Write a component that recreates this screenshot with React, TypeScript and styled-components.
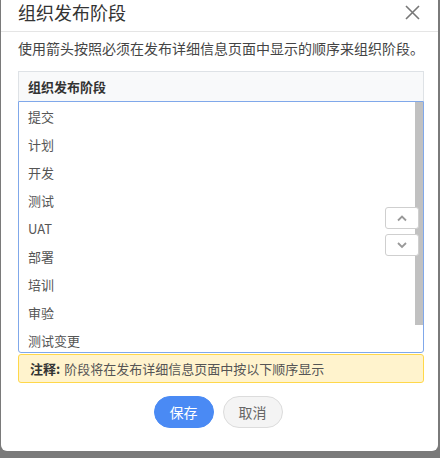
import styled, { createGlobalStyle } from 'styled-components'

const GlobalStyle = createGlobalStyle`
  html, body {
    margin: 0;
    padding: 0;
    background: #7a7a7a;
    font-family: "Noto Sans CJK SC", "Noto Sans", sans-serif;
  }
`

const Dialog = styled.div`
  margin-left: 1px;
  width: 437px;
  height: 451px;
  background: #fff;
  border-radius: 0 0 6px 6px;
  box-sizing: border-box;
`

const Header = styled.div`
  height: 25px;
  padding: 0 18px 6px 17px;
  display: flex;
  align-items: center;
  justify-content: space-between;
  border-bottom: 1px solid #e5e5e5;
`

const Title = styled.div`
  font-size: 18px;
  line-height: 25px;
  color: #333;
`

const CloseButton = styled.button`
  border: none;
  background: none;
  padding: 0;
  width: 16px;
  height: 16px;
  display: flex;
  align-items: center;
  justify-content: center;
  cursor: pointer;
`

const Body = styled.div`
  padding: 0 14px 0 17px;
`

const Description = styled.p`
  margin: 6px 0 13px;
  font-size: 14px;
  line-height: 20px;
  color: #444;
  white-space: nowrap;
`

const TableHeader = styled.div`
  height: 29px;
  padding-left: 9px;
  display: flex;
  align-items: center;
  background: #f8f9fa;
  border: 1px solid #dee2e6;
  border-bottom: none;
  font-size: 13px;
  font-weight: 700;
  color: #333;
`

const ListWrap = styled.div`
  position: relative;
`

const StageList = styled.ul`
  margin: 0;
  padding: 0 0 28px;
  list-style: none;
  box-sizing: border-box;
  height: 252px;
  border: 1px solid #80a8ea;
  border-radius: 0 0 3px 3px;
  overflow-y: auto;
  scrollbar-width: none;

  &::-webkit-scrollbar {
    display: none;
  }
`

// drawn scrollbar thumb, sits over the list's right edge
const ScrollThumb = styled.div`
  position: absolute;
  top: 1px;
  right: 1px;
  width: 8px;
  height: 223px;
  background: #c1c1c1;
`

const StageItem = styled.li`
  height: 28px;
  padding-left: 9px;
  display: flex;
  align-items: center;
  font-size: 13px;
  color: #555;
`

const MoveButtons = styled.div`
  position: absolute;
  top: 106px;
  right: 5px;
  display: flex;
  flex-direction: column;
  gap: 5px;
  z-index: 1;
`

const MoveButton = styled.button`
  width: 34px;
  height: 22px;
  padding: 0;
  border: 1px solid #cfcfcf;
  border-radius: 3px;
  background: #fff;
  display: flex;
  align-items: center;
  justify-content: center;
  cursor: pointer;
`

const Note = styled.div`
  margin-top: 1px;
  height: 27px;
  padding-left: 11px;
  display: flex;
  align-items: center;
  background: #fff3cd;
  border: 1px solid #ffd84a;
  border-radius: 3px;
  font-size: 13px;
  color: #555;

  b {
    color: #333;
    font-weight: 700;
    margin-right: 4px;
  }
`

const Footer = styled.div`
  margin-top: 13px;
  display: flex;
  justify-content: center;
  gap: 9px;
  padding-right: 6px;
`

const PillButton = styled.button<{ primary?: boolean }>`
  width: 60px;
  height: 32px;
  border-radius: 16px;
  font-family: inherit;
  font-size: 14px;
  cursor: pointer;
  background: ${({ primary }) => (primary ? '#4a8af4' : '#f4f4f4')};
  color: ${({ primary }) => (primary ? '#fff' : '#666')};
  border: 1px solid ${({ primary }) => (primary ? '#4a8af4' : '#dcdcdc')};
`

const Chevron = ({ up }: { up?: boolean }) => (
  <svg width="12" height="8" viewBox="0 0 12 8">
    <path
      d={up ? 'M2 6.5 L6 2.5 L10 6.5' : 'M2 2 L6 6 L10 2'}
      fill="none"
      stroke="#999"
      strokeWidth="1.8"
    />
  </svg>
)

const stages = ['提交', '计划', '开发', '测试', 'UAT', '部署', '培训', '审验', '测试变更']

export default function App() {
  return (
    <>
      <GlobalStyle />
      <Dialog>
        <Header>
          <Title>组织发布阶段</Title>
          <CloseButton aria-label="关闭">
            <svg width="15" height="15" viewBox="0 0 15 15">
              <path d="M1 1 L14 14 M14 1 L1 14" stroke="#777" strokeWidth="1.6" />
            </svg>
          </CloseButton>
        </Header>
        <Body>
          <Description>使用箭头按照必须在发布详细信息页面中显示的顺序来组织阶段。</Description>
          <TableHeader>组织发布阶段</TableHeader>
          <ListWrap>
            <StageList>
              {stages.map((s) => (
                <StageItem key={s}>{s}</StageItem>
              ))}
            </StageList>
            <ScrollThumb />
            <MoveButtons>
              <MoveButton aria-label="上移">
                <Chevron up />
              </MoveButton>
              <MoveButton aria-label="下移">
                <Chevron />
              </MoveButton>
            </MoveButtons>
          </ListWrap>
          <Note>
            <b>注释:</b>阶段将在发布详细信息页面中按以下顺序显示
          </Note>
          <Footer>
            <PillButton primary>保存</PillButton>
            <PillButton>取消</PillButton>
          </Footer>
        </Body>
      </Dialog>
    </>
  )
}
